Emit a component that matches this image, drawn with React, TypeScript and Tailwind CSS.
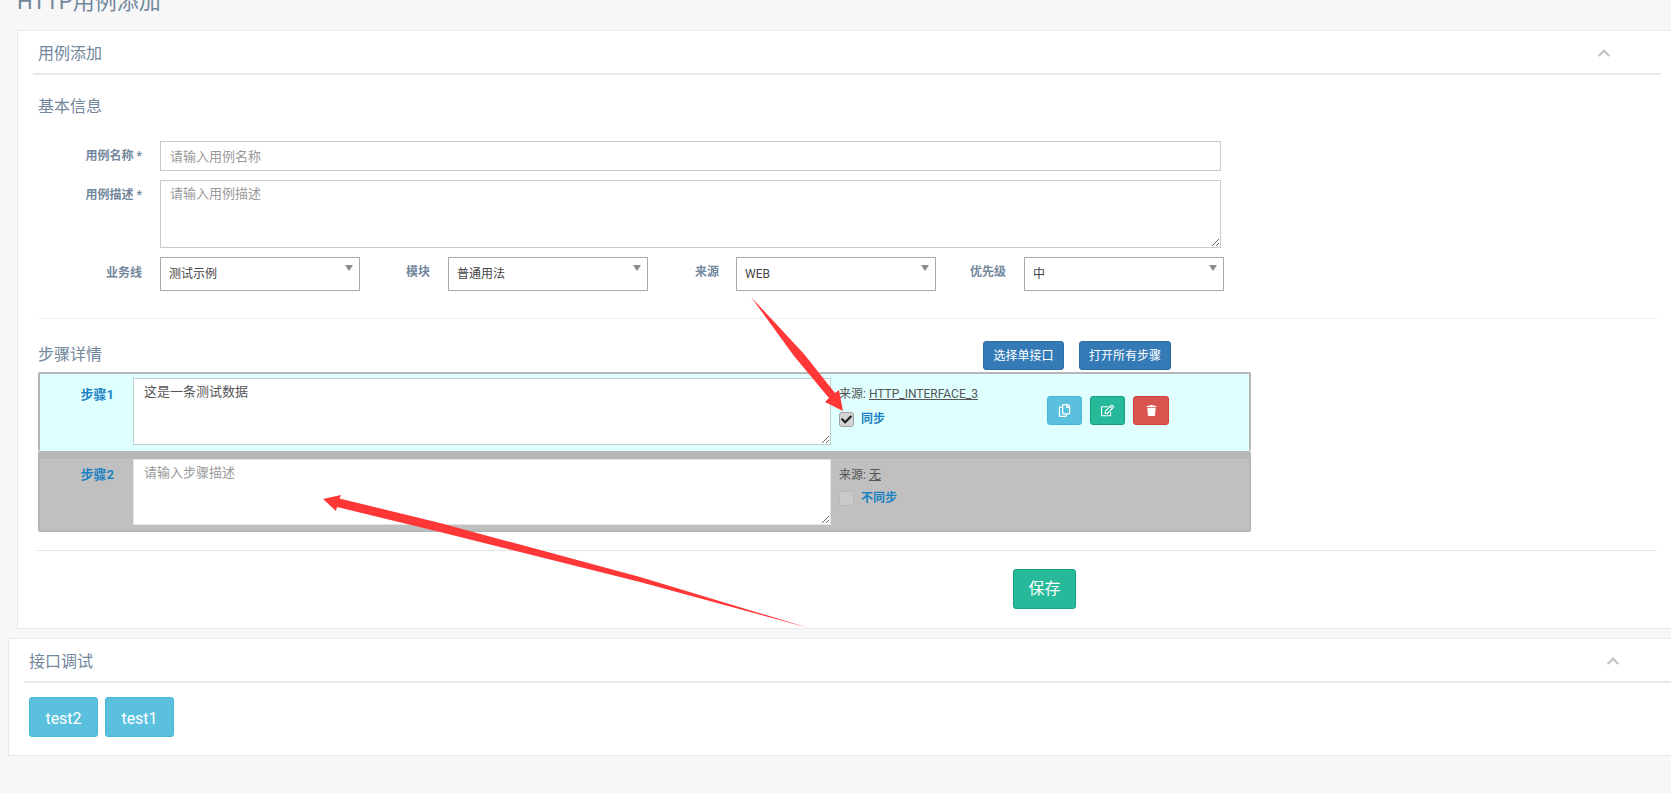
import { FaChevronUp, FaRegCopy, FaRegEdit, FaTrash, FaCheck } from "react-icons/fa";

const ff = 'font-["Roboto","Noto_Sans_CJK_SC",sans-serif]';

function Sel({ value, w }: { value: string; w: string }) {
  return (
    <div className={`relative h-[34px] ${w} shrink-0 border border-[#a9a9a9] bg-white pl-2 flex items-center text-[12px] text-[#444]`}>
      <span>{value}</span>
      <svg className="absolute right-[6px] top-[7px]" width="8" height="6" viewBox="0 0 8 6">
        <path d="M0 0h8L4 6z" fill="#8a8a8a" />
      </svg>
    </div>
  );
}

function Label({ children, w }: { children: React.ReactNode; w: string }) {
  return <div className={`${w} shrink-0 text-right text-[12px] font-bold text-[#73879c]`}>{children}</div>;
}

export default function App() {
  return (
    <div className={`relative h-[793px] w-full overflow-hidden bg-[#f7f7f7] text-[#73879c] ${ff}`}>
      <div className="h-[30px] overflow-hidden pl-[17px]">
        <div className="-mt-[13px] text-[22px] leading-[30px] text-[#73879c]">HTTP用例添加</div>
      </div>

      {/* panel 1 */}
      <section className="ml-[17px] h-[599px] border border-r-0 border-[#e6e9ed] bg-white pl-[15px] pr-[10px]">
        <header className="flex h-[44px] items-center justify-between border-b-2 border-[#e6e9ed] pl-[5px] pr-[50px] pt-[3px]">
          <h2 className="text-[16px] text-[#73879c]">用例添加</h2>
          <FaChevronUp className="mb-[2px] text-[14px] text-[#c0c3c8]" />
        </header>

        <div className="mt-[22px] pl-[5px] text-[16px] leading-[20px]">基本信息</div>

        <div className="mt-[24px] flex items-center">
          <Label w="w-[109px]">用例名称 *</Label>
          <input
            className="ml-[18px] h-[30px] w-[1061px] border border-[#c9c9c9] bg-white px-[9px] text-[13px] outline-none placeholder:text-[#999]"
            placeholder="请输入用例名称"
          />
        </div>
        <div className="mt-[9px] flex items-start">
          <Label w="w-[109px] pt-[6px]">用例描述 *</Label>
          <textarea
            className="ml-[18px] h-[68px] w-[1061px] border border-[#c9c9c9] bg-white px-[9px] py-[3px] text-[13px] outline-none placeholder:text-[#999]"
            placeholder="请输入用例描述"
          />
        </div>
        <div className="mt-[9px] flex items-start">
          <Label w="w-[109px] pt-[7px]">业务线</Label>
          <div className="w-[18px] shrink-0" />
          <Sel value="测试示例" w="w-[200px]" />
          <div className="w-[70px] shrink-0 pt-[6px] text-right text-[12px] font-bold text-[#73879c]">模块</div>
          <div className="w-[18px] shrink-0" />
          <Sel value="普通用法" w="w-[200px]" />
          <div className="w-[71px] shrink-0 pt-[6px] text-right text-[12px] font-bold text-[#73879c]">来源</div>
          <div className="w-[17px] shrink-0" />
          <Sel value="WEB" w="w-[200px]" />
          <div className="w-[70px] shrink-0 pt-[6px] text-right text-[12px] font-bold text-[#73879c]">优先级</div>
          <div className="w-[18px] shrink-0" />
          <Sel value="中" w="w-[200px]" />
        </div>

        <hr className="ml-[5px] mr-[4px] mt-[27px] border-0 border-t border-[#eeeeee]" />

        <div className="ml-[5px] mt-[22px] flex h-[29px] w-[1133px] items-center justify-between">
          <div className="-mt-[1px] text-[16px] text-[#73879c]">步骤详情</div>
          <div className="flex gap-[15px]">
            <button className="h-[29px] w-[81px] rounded-[3px] border border-[#2e6da4] bg-[#337ab7] text-[12px] text-white">选择单接口</button>
            <button className="h-[29px] w-[92px] rounded-[3px] border border-[#2e6da4] bg-[#337ab7] text-[12px] text-white">打开所有步骤</button>
          </div>
        </div>

        <div className="ml-[5px] mt-[2px] w-[1213px]">
          <div className="flex h-[79px] items-start rounded-[2px] border-2 border-b-0 border-[#b4b6b8] bg-[#e0ffff] pt-[4px]">
            <div className="w-[74px] shrink-0 pt-[7px] text-right text-[13px] font-bold text-[#1a82c4]">步骤1</div>
            <textarea
              defaultValue="这是一条测试数据"
              className="ml-[19px] h-[67px] w-[698px] shrink-0 border border-[#bcd0d0] bg-white px-[10px] py-[3px] text-[13px] text-[#555] outline-none"
            />
            <div className="ml-[8px] w-[208px] shrink-0 pt-[7px]">
              <div className="text-[12px] leading-[18px] text-[#555]">
                来源: <span className="underline">HTTP_INTERFACE_3</span>
              </div>
              <div className="mt-[7px] flex items-center gap-[7px]">
                <div className="flex h-[15px] w-[15px] items-center justify-center rounded-[3px] border border-[#a0a0a0] bg-[#d4d4d4] text-[11px] text-[#222]">
                  <FaCheck />
                </div>
                <span className="text-[12px] font-bold text-[#1a82c4]">同步</span>
              </div>
            </div>
            <div className="mt-[18px] flex gap-[8px]">
              <button className="flex h-[29px] w-[35px] items-center justify-center rounded-[3px] border border-[#46b8da] bg-[#5bc0de] text-[13px] text-white">
                <FaRegCopy />
              </button>
              <button className="flex h-[29px] w-[35px] items-center justify-center rounded-[3px] border border-[#169f85] bg-[#26b99a] text-[13px] text-white">
                <FaRegEdit />
              </button>
              <button className="flex h-[29px] w-[36px] items-center justify-center rounded-[3px] border border-[#d43f3a] bg-[#d9534f] text-[11px] text-white">
                <FaTrash />
              </button>
            </div>
          </div>
          <div className="flex h-[81px] items-start rounded-[2px] border-2 border-t-[8px] border-[#b4b6b8] bg-[#c0c0c0]">
            <div className="w-[74px] shrink-0 pt-[6px] text-right text-[13px] font-bold text-[#1a82c4]">步骤2</div>
            <textarea
              placeholder="请输入步骤描述"
              className="ml-[19px] h-[66px] w-[698px] shrink-0 border border-[#e5e5e5] bg-white px-[10px] py-[3px] text-[13px] outline-none placeholder:text-[#999]"
            />
            <div className="ml-[8px] shrink-0 pt-[7px]">
              <div className="text-[12px] leading-[18px] text-[#555]">
                来源: <span className="underline">无</span>
              </div>
              <div className="mt-[5px] flex items-center gap-[7px]">
                <div className="h-[15px] w-[15px] rounded-[3px] border border-[#b9b9b9] bg-[#cacaca]" />
                <span className="text-[12px] font-bold text-[#1a82c4]">不同步</span>
              </div>
            </div>
          </div>
        </div>

        <hr className="ml-[4px] mr-[4px] mt-[18px] border-0 border-t border-[#e5e5e5]" />

        <div className="mt-[18px] pl-[980px]">
          <button className="h-[40px] w-[63px] rounded-[3px] border border-[#169f85] bg-[#26b99a] text-[16px] text-white">保存</button>
        </div>
      </section>

      {/* panel 2 */}
      <section className="ml-[8px] mt-[9px] h-[118px] border border-r-0 border-[#e6e9ed] bg-white pl-[15px]">
        <header className="flex h-[44px] items-center justify-between border-b-2 border-[#e6e9ed] pl-[5px] pr-[51px] pt-[3px]">
          <h2 className="text-[16px] text-[#73879c]">接口调试</h2>
          <FaChevronUp className="mb-[2px] text-[14px] text-[#c0c3c8]" />
        </header>
        <div className="mt-[14px] flex gap-[7px] pl-[5px]">
          <button className="h-[40px] w-[69px] rounded-[3px] border border-[#46b8da] bg-[#5bc0de] pt-[3px] text-[16px] text-white">test2</button>
          <button className="h-[40px] w-[69px] rounded-[3px] border border-[#46b8da] bg-[#5bc0de] pt-[3px] text-[16px] text-white">test1</button>
        </div>
      </section>

      {/* annotation arrows */}
      <svg className="pointer-events-none absolute left-0 top-0" width="1671" height="793" viewBox="0 0 1671 793">
        <polygon points="751,297 804,354 835,393 839,390 843,411 825,402 829,398 794,356" fill="#ff3737" />
        <polygon points="323,499 341,495 339.5,498.5 440,523 640,577 809,628 640,582 440,532 337,507 336,511" fill="#ff3737" />
      </svg>
    </div>
  );
}
